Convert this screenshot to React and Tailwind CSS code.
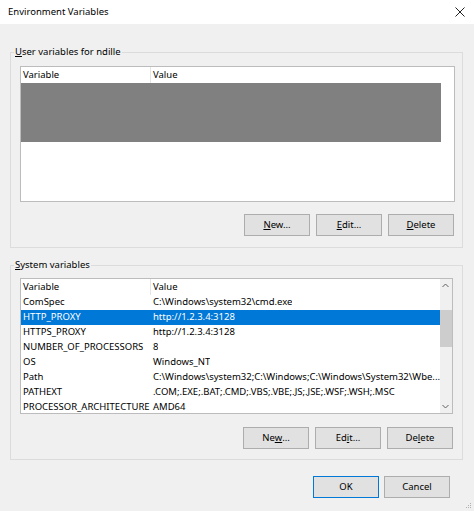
import React from "react";

const font = { fontFamily: '"Noto Sans", "Open Sans", sans-serif' };

function U({ children }) {
  return <span className="underline underline-offset-[1px] decoration-[0.5px]">{children}</span>;
}

function Btn({ children, primary }) {
  return (
    <div
      className={
        "w-[66px] h-[22px] flex items-center justify-center text-[9.5px] text-black bg-[#e1e1e1] border " +
        (primary ? "border-[#0078d7]" : "border-[#adadad]")
      }
    >
      {children}
    </div>
  );
}

const sysRows = [
  ["ComSpec", "C:\\Windows\\system32\\cmd.exe"],
  ["HTTP_PROXY", "http://1.2.3.4:3128"],
  ["HTTPS_PROXY", "http://1.2.3.4:3128"],
  ["NUMBER_OF_PROCESSORS", "8"],
  ["OS", "Windows_NT"],
  ["Path", "C:\\Windows\\system32;C:\\Windows;C:\\Windows\\System32\\Wbe..."],
  ["PATHEXT", ".COM;.EXE;.BAT;.CMD;.VBS;.VBE;.JS;.JSE;.WSF;.WSH;.MSC"],
  ["PROCESSOR_ARCHITECTURE", "AMD64"],
];

function Header() {
  return (
    <div className="flex h-[16px] items-center bg-white text-[9.5px] text-black shrink-0">
      <div className="w-[130px] pl-[2px] border-r border-[#e5e5e5] h-full flex items-center">Variable</div>
      <div className="pl-[2px]">Value</div>
    </div>
  );
}

export default function App() {
  return (
    <div style={font} className="relative w-[474px] h-[511px] bg-[#f0f0f0] flex flex-col text-black overflow-hidden">
      <div className="h-[24px] bg-white flex items-center justify-between pl-[8px] pr-[9px] shrink-0">
        <span className="text-[9.5px]">Environment Variables</span>
        <svg width="10" height="10" viewBox="0 0 10 10">
          <path d="M0.5 0.5 L9.5 9.5 M9.5 0.5 L0.5 9.5" stroke="#222" strokeWidth="1" />
        </svg>
      </div>

      <div className="pl-[10px] pr-[11px] pt-[28px] flex flex-col">
        {/* User group */}
        <div className="relative border border-[#dcdcdc] pl-[9px] pr-[7px] pt-[13px] pb-[11px] flex flex-col">
          <span className="absolute left-[3px] top-[-9px] bg-[#f0f0f0] px-[1px] text-[9.5px] leading-[16px]">
            <U>U</U>ser variables for ndille
          </span>
          <div className="h-[136px] bg-white border border-[#bcbcbc] flex flex-col">
            <Header />
            <div className="h-[59px] bg-[#808080] mr-[13px]" />
          </div>
          <div className="flex justify-end gap-[6px] mt-[12px] pr-[1px]">
            <Btn><U>N</U>ew...</Btn>
            <Btn><U>E</U>dit...</Btn>
            <Btn><U>D</U>elete</Btn>
          </div>
        </div>

        {/* System group */}
        <div className="relative mt-[17px] border border-[#dcdcdc] pl-[9px] pr-[9px] pt-[12px] pb-[10px] flex flex-col">
          <span className="absolute left-[3px] top-[-9px] bg-[#f0f0f0] px-[1px] text-[9.5px] leading-[16px]">
            <U>S</U>ystem variables
          </span>
          <div className="h-[136px] bg-white border border-[#bcbcbc] flex overflow-hidden">
            <div className="flex-1 flex flex-col">
              <Header />
              {sysRows.map(([k, v], i) => (
                <div
                  key={k}
                  className={
                    "flex h-[15px] shrink-0 items-center text-[9.5px] whitespace-nowrap " +
                    (i === 1 ? "bg-[#0078d7] text-white" : "text-black")
                  }
                >
                  <div className="w-[130px] pl-[2px] overflow-hidden">{k}</div>
                  <div className="pl-[2px] overflow-hidden">{v}</div>
                </div>
              ))}
            </div>
            <div className="w-[13px] bg-[#f0f0f0] flex flex-col items-center justify-between py-[4px]">
              <div className="flex flex-col items-center">
                <svg width="7" height="5" viewBox="0 0 7 5">
                  <path d="M0.5 4 L3.5 1 L6.5 4" fill="none" stroke="#606060" strokeWidth="1" />
                </svg>
                <div className="w-[12px] h-[37px] bg-[#cdcdcd] mt-[22px]" />
              </div>
              <svg width="7" height="5" viewBox="0 0 7 5">
                <path d="M0.5 1 L3.5 4 L6.5 1" fill="none" stroke="#606060" strokeWidth="1" />
              </svg>
            </div>
          </div>
          <div className="flex justify-end gap-[6px] mt-[13px] pr-[-1px]">
            <Btn>Ne<U>w</U>...</Btn>
            <Btn>Ed<U>i</U>t...</Btn>
            <Btn>De<U>l</U>ete</Btn>
          </div>
        </div>

        <div className="flex justify-end gap-[5px] mt-[16px] pr-[13px]">
          <Btn primary>OK</Btn>
          <Btn>Cancel</Btn>
        </div>
      </div>

      <svg className="absolute right-[2px] bottom-[2px]" width="8" height="8" viewBox="0 0 8 8">
        <rect x="6" y="2" width="1" height="1" fill="#b0b0b0" />
        <rect x="4" y="4" width="1" height="1" fill="#b0b0b0" />
        <rect x="6" y="4" width="1" height="1" fill="#b0b0b0" />
        <rect x="2" y="6" width="1" height="1" fill="#b0b0b0" />
        <rect x="4" y="6" width="1" height="1" fill="#b0b0b0" />
        <rect x="6" y="6" width="1" height="1" fill="#b0b0b0" />
      </svg>
    </div>
  );
}
